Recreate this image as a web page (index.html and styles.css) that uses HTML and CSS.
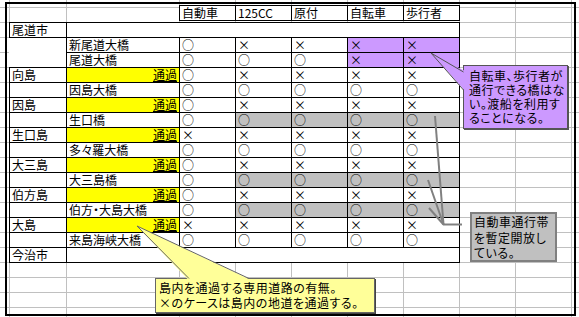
FILE: index.html
```html
<!DOCTYPE html>
<html lang="ja">
<head>
<meta charset="utf-8">
<title>しまなみ海道 通行区分</title>
<link rel="stylesheet" href="styles.css">
</head>
<body>
<div class="sheet">
  <div class="frame">
    <div class="table">
      <div class="row head">
        <div></div><div></div>
        <div class="c">自動車</div><div class="c">125CC</div><div class="c">原付</div><div class="c">自転車</div><div class="c last">歩行者</div>
      </div>
      <div class="row">
        <div class="c">尾道市</div><div class="c span last"></div>
      </div>
      <div class="row">
        <div class="open top"></div>
        <div class="c">新尾道大橋</div><div class="c">○</div><div class="c">×</div><div class="c">×</div><div class="c purple">×</div><div class="c purple last">×</div>
      </div>
      <div class="row">
        <div class="open"></div>
        <div class="c">尾道大橋</div><div class="c">○</div><div class="c">○</div><div class="c">○</div><div class="c purple">×</div><div class="c purple last">×</div>
      </div>
      <div class="row">
        <div class="c">向島</div>
        <div class="c pass"><span>通過</span></div><div class="c">○</div><div class="c">×</div><div class="c">×</div><div class="c">×</div><div class="c last">×</div>
      </div>
      <div class="row">
        <div class="open top left"></div>
        <div class="c">因島大橋</div><div class="c">○</div><div class="c">○</div><div class="c">○</div><div class="c">○</div><div class="c last">○</div>
      </div>
      <div class="row">
        <div class="c">因島</div>
        <div class="c pass"><span>通過</span></div><div class="c">○</div><div class="c">×</div><div class="c">×</div><div class="c">×</div><div class="c last">×</div>
      </div>
      <div class="row">
        <div class="open top left"></div>
        <div class="c">生口橋</div><div class="c">○</div><div class="c grey">○</div><div class="c grey">○</div><div class="c grey">○</div><div class="c grey last">○</div>
      </div>
      <div class="row">
        <div class="c">生口島</div>
        <div class="c pass"><span>通過</span></div><div class="c">×</div><div class="c">×</div><div class="c">×</div><div class="c">×</div><div class="c last">×</div>
      </div>
      <div class="row">
        <div class="open top left"></div>
        <div class="c">多々羅大橋</div><div class="c">○</div><div class="c">○</div><div class="c">○</div><div class="c">○</div><div class="c last">○</div>
      </div>
      <div class="row">
        <div class="c">大三島</div>
        <div class="c pass"><span>通過</span></div><div class="c">○</div><div class="c">×</div><div class="c">×</div><div class="c">×</div><div class="c last">×</div>
      </div>
      <div class="row">
        <div class="open top left"></div>
        <div class="c">大三島橋</div><div class="c">○</div><div class="c grey">○</div><div class="c grey">○</div><div class="c grey">○</div><div class="c grey last">○</div>
      </div>
      <div class="row">
        <div class="c">伯方島</div>
        <div class="c pass"><span>通過</span></div><div class="c">○</div><div class="c">×</div><div class="c">×</div><div class="c">×</div><div class="c last">×</div>
      </div>
      <div class="row">
        <div class="open top left"></div>
        <div class="c">伯方・大島大橋</div><div class="c">○</div><div class="c grey">○</div><div class="c grey">○</div><div class="c grey">○</div><div class="c grey last">○</div>
      </div>
      <div class="row">
        <div class="c">大島</div>
        <div class="c pass"><span>通過</span></div><div class="c">×</div><div class="c">×</div><div class="c">×</div><div class="c">×</div><div class="c last">×</div>
      </div>
      <div class="row">
        <div class="open top left"></div>
        <div class="c">来島海峡大橋</div><div class="c">○</div><div class="c">○</div><div class="c">○</div><div class="c">○</div><div class="c last">○</div>
      </div>
      <div class="row end">
        <div class="c">今治市</div><div class="c span last"></div>
      </div>
    </div>
  </div>

  <div class="note purple-note">自転車、歩行者が<br>通行できる橋はな<br>い。渡船を利用す<br>ることになる。</div>
  <div class="note grey-note">自動車通行帯<br>を暫定開放し<br>ている。</div>
  <div class="note yellow-note">島内を通過する専用道路の有無。<br>×のケースは島内の地道を通過する。</div>

  <svg class="leaders" width="579" height="317" viewBox="0 0 579 317" aria-hidden="true">
    <polygon points="431,53 465,71 465,91" fill="#cc99ff"/>
    <polyline points="463.5,72 431,53 463.5,90" fill="none" stroke="#555" stroke-width="1"/>
    <polygon points="137,226 188,279.6 250,279.6" fill="#ffff99"/>
    <polyline points="189,278.5 137,226 249,278.5" fill="none" stroke="#666" stroke-width="1"/>
    <g fill="none" stroke="#808080" stroke-width="2">
      <line x1="435" y1="116" x2="443.5" y2="224.5"/>
      <line x1="428" y1="180" x2="443.5" y2="224.5"/>
      <line x1="429" y1="208" x2="443.5" y2="224.5"/>
      <line x1="443" y1="224.5" x2="462" y2="224.5"/>
    </g>
  </svg>
</div>
</body>
</html>
```

FILE: styles.css
```css
html, body {
  margin: 0;
  padding: 0;
  background: #fff;
}

body {
  font-family: "Noto Sans CJK JP", "Noto Sans", sans-serif;
  font-size: 12px;
  line-height: 14px;
  color: #000;
  font-feature-settings: "palt" 1;
}

.sheet {
  position: relative;
  width: 579px;
  height: 317px;
  overflow: hidden;
  background-color: #fff;
  background-image:
    repeating-linear-gradient(to bottom, transparent 0 7px, #c0c0c0 7px 8px, transparent 8px 15px),
    linear-gradient(to right,
      transparent 0 9px, #c0c0c0 9px 10px,
      transparent 10px 66px, #c0c0c0 66px 67px,
      transparent 67px 179px, #c0c0c0 179px 180px,
      transparent 180px 235px, #c0c0c0 235px 236px,
      transparent 236px 291px, #c0c0c0 291px 292px,
      transparent 292px 347px, #c0c0c0 347px 348px,
      transparent 348px 403px, #c0c0c0 403px 404px,
      transparent 404px 459px, #c0c0c0 459px 460px,
      transparent 460px 515px, #c0c0c0 515px 516px,
      transparent 516px 571px, #c0c0c0 571px 572px,
      transparent 572px);
}

.frame {
  box-sizing: border-box;
  position: relative;
  top: 2px;
  left: 5px;
  width: 571px;
  height: 314px;
  border: 2px solid #000;
  padding: 1px 0 0 2px;
}

.table {
  width: 451px;
}

.row {
  display: grid;
  grid-template-columns: 57px 113px 56px 56px 56px 56px 57px;
  height: 15px;
}

.row > div {
  box-sizing: border-box;
  min-width: 0;
}

.c {
  border-left: 1px solid #000;
  border-top: 1px solid #000;
  background: #fff;
  padding-left: 2px;
  white-space: nowrap;
  overflow: hidden;
  line-height: 14px;
}

.last {
  border-right: 1px solid #000;
}

.span {
  grid-column: 2 / -1;
}

.head {
  height: 16px;
  margin-bottom: 1px;
}

.head .c {
  border-bottom: 1px solid #000;
}

.row.end {
  height: 16px;
}

.row.end .c {
  border-bottom: 1px solid #000;
}

.open {
  background: #fff;
}

.open.top {
  border-top: 1px solid #000;
}

.open.left {
  border-left: 1px solid #000;
}

.pass {
  background: #ffff00;
  text-align: right;
  padding-right: 2px;
}

.pass span {
  text-decoration: underline;
  text-underline-offset: 1px;
}

.purple {
  background: #cc99ff;
}

.grey {
  background: #c0c0c0;
}

.note {
  position: absolute;
  box-sizing: border-box;
  white-space: nowrap;
  font-size: 12px;
  letter-spacing: 0.5px;
  color: #000;
}

.purple-note {
  left: 463px;
  top: 65px;
  width: 105px;
  height: 64px;
  background: #cc99ff;
  border: 1px solid #555;
  box-shadow: 1px 1px 0 #555;
  padding: 3px 0 0 5px;
  line-height: 14px;
}

.grey-note {
  left: 470px;
  top: 212px;
  width: 87px;
  height: 50px;
  background: #c0c0c0;
  border: 2px solid #808080;
  padding: 0 0 0 2px;
  line-height: 15.5px;
}

.yellow-note {
  left: 155px;
  top: 278px;
  width: 220px;
  height: 35px;
  background: #ffff99;
  border: 1px solid #666;
  box-shadow: 1px 1px 0 #444;
  padding: 2px 0 0 3px;
  line-height: 14.5px;
}

.leaders {
  position: absolute;
  left: 0;
  top: 0;
  pointer-events: none;
}
```
